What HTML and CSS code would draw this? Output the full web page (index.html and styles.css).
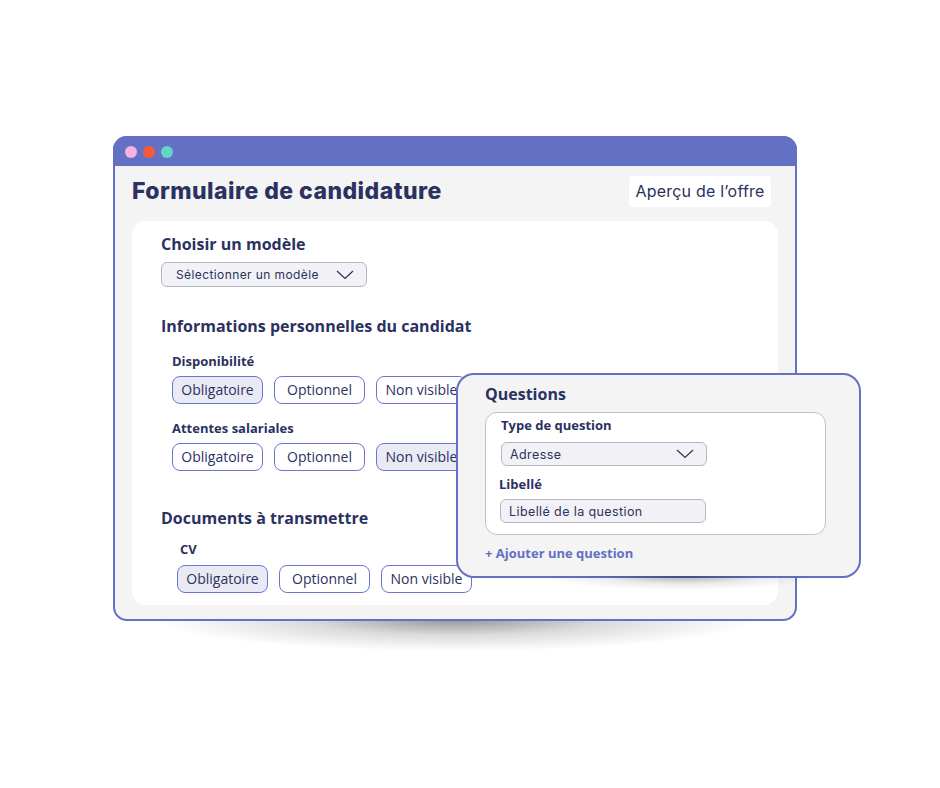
FILE: index.html
```html
<!DOCTYPE html>
<html lang="fr">
<head>
<meta charset="utf-8">
<title>Formulaire de candidature</title>
<link rel="stylesheet" href="styles.css">
</head>
<body>
<div class="stage">
  <div class="window">
    <div class="titlebar">
      <span class="dot dot-pink"></span>
      <span class="dot dot-red"></span>
      <span class="dot dot-teal"></span>
    </div>
    <div class="body">
      <div class="header">
        <h1 class="title">Formulaire de candidature</h1>
        <div class="preview-btn">Aperçu de l’offre</div>
      </div>
      <div class="card">
        <h2 class="section-title">Choisir un modèle</h2>
        <div class="select select-model">
          <span>Sélectionner un modèle</span>
          <svg class="chevron" width="18" height="10" viewBox="0 0 18 10"><path d="M1 1 L9 8.5 L17 1" fill="none" stroke="#2b3160" stroke-width="1.2"/></svg>
        </div>

        <h2 class="section-title gap-info">Informations personnelles du candidat</h2>
        <div class="field">
          <div class="field-label">Disponibilité</div>
          <div class="options">
            <div class="opt opt-on">Obligatoire</div>
            <div class="opt">Optionnel</div>
            <div class="opt">Non visible</div>
          </div>
        </div>
        <div class="field field-second">
          <div class="field-label">Attentes salariales</div>
          <div class="options">
            <div class="opt">Obligatoire</div>
            <div class="opt">Optionnel</div>
            <div class="opt opt-on">Non visible</div>
          </div>
        </div>

        <h2 class="section-title gap-docs">Documents à transmettre</h2>
        <div class="field field-cv">
          <div class="field-label cv-label">CV</div>
          <div class="options">
            <div class="opt opt-on">Obligatoire</div>
            <div class="opt">Optionnel</div>
            <div class="opt">Non visible</div>
          </div>
        </div>
      </div>
    </div>
  </div>

  <div class="popup">
    <h2 class="section-title">Questions</h2>
    <div class="qbox">
      <div class="field-label">Type de question</div>
      <div class="select select-type">
        <span>Adresse</span>
        <svg class="chevron" width="18" height="10" viewBox="0 0 18 10"><path d="M1 1 L9 8.5 L17 1" fill="none" stroke="#2b3160" stroke-width="1.2"/></svg>
      </div>
      <div class="field-label libelle">Libellé</div>
      <div class="select select-input">
        <span>Libellé de la question</span>
      </div>
    </div>
    <div class="add-q">+ Ajouter une question</div>
  </div>
</div>
</body>
</html>
```

FILE: styles.css
```css
* { box-sizing: border-box; }
html { background: #ffffff; }
html, body { margin: 0; padding: 0; }
body {
  font-family: "Open Sans", "Noto Sans", "DejaVu Sans", sans-serif;
  color: #2b3160;
  width: 940px;
  height: 788px;
  overflow: hidden;
}
.stage {
  position: relative;
  padding: 136px 0 0 113px;
}
.window {
  position: relative;
  width: 684px;
  height: 485px;
  border: 2px solid #6470c4;
  border-radius: 14px;
  background: #f4f4f4;
}
.window::after {
  content: "";
  position: absolute;
  left: 40px;
  right: 40px;
  bottom: -36px;
  height: 36px;
  background: radial-gradient(ellipse 50% 90% at 50% 0%, rgba(0,0,0,0.42), rgba(0,0,0,0.14) 50%, rgba(0,0,0,0) 100%);
  z-index: -1;
}
.titlebar {
  margin: -2px -2px 0 -2px;
  background: #6470c4;
  border-radius: 14px 14px 0 0;
  display: flex;
  align-items: center;
  gap: 6px;
  padding: 2px 0 0 12px;
  height: 30px;
}
.dot { width: 12px; height: 12px; border-radius: 50%; display: block; }
.dot-pink { background: #f8b2e3; }
.dot-red { background: #f45b38; }
.dot-teal { background: #61d6c5; }
.body { padding: 0 17px 13px 17px; }
.header {
  display: flex;
  align-items: center;
  justify-content: space-between;
  padding: 10px 7px 14px 0;
}
.title {
  margin: 0;
  font-family: "Inter", "Lato", sans-serif;
  font-weight: 800;
  font-size: 23px;
  line-height: 31px;
  letter-spacing: 0.45px;
  color: #2b3160;
}
.preview-btn {
  height: 31px;
  width: 142px;
  background: #ffffff;
  border-radius: 4px;
  font-family: "Inter", "Lato", sans-serif;
  font-size: 16px;
  line-height: 31px;
  letter-spacing: 0.2px;
  text-align: center;
  color: #2b3160;
}
.card {
  background: #ffffff;
  border-radius: 14px;
  height: 384px;
  padding: 13px 0 0 29px;
}
.section-title {
  margin: 0;
  font-size: 16px;
  line-height: 20px;
  font-weight: 700;
  color: #2b3160;
}
.select {
  display: flex;
  align-items: center;
  justify-content: space-between;
  width: 206px;
  height: 25px;
  border: 1px solid #b5b5c2;
  border-radius: 6px;
  background: #f2f2f6;
  font-family: "Inter", "Lato", sans-serif;
  font-size: 12px;
  letter-spacing: 0.4px;
  color: #2b3160;
}
.select-model { margin-top: 8px; padding: 0 12px 0 14px; }
.select-model .chevron { margin-top: 1px; }
.gap-info { margin-top: 29px; }
.field { padding-left: 11px; margin-top: 16px; }
.field-second { margin-top: 15px; }
.field-label {
  font-size: 13px;
  line-height: 18px;
  font-weight: 700;
  color: #2b3160;
}
.options { display: flex; gap: 11px; margin-top: 6px; }
.opt {
  width: 91px;
  height: 28px;
  border: 1px solid #6b76d2;
  border-radius: 8px;
  background: #ffffff;
  font-size: 14px;
  line-height: 26px;
  text-align: center;
  color: #2b3160;
}
.opt-on { background: #e9eaf4; }
.gap-docs { margin-top: 37px; }
.field-cv { margin-top: 12px; padding-left: 16px; }
.cv-label { padding-left: 3px; }
.field-cv .options { margin-top: 7px; }

.popup {
  position: absolute;
  left: 456px;
  top: 373px;
  width: 405px;
  height: 205px;
  border: 2px solid #6470c4;
  border-radius: 18px;
  background: #f4f4f4;
  padding: 9px 0 0 27px;
  z-index: 1;
}
.popup::after {
  content: "";
  position: absolute;
  left: 70px;
  right: 50px;
  bottom: -18px;
  height: 18px;
  background: radial-gradient(ellipse 50% 80% at 55% 0%, rgba(0,0,0,0.32), rgba(0,0,0,0.08) 55%, rgba(0,0,0,0) 100%);
  z-index: -1;
}
.qbox {
  margin-top: 8px;
  width: 341px;
  height: 123px;
  background: #ffffff;
  border: 1px solid #c2c2ca;
  border-radius: 12px;
  padding: 3px 0 0 15px;
}
.select-type { margin-top: 8px; height: 24px; padding: 0 12px 0 8px; font-size: 12.5px; }
.libelle { margin-top: 9px; margin-left: -2px; }
.select-input { margin-top: 6px; height: 24px; margin-left: -1px; padding: 0 8px; font-size: 12.5px; }
.add-q {
  margin-top: 9px;
  font-size: 13px;
  line-height: 18px;
  font-weight: 700;
  color: #6470c4;
}
```
